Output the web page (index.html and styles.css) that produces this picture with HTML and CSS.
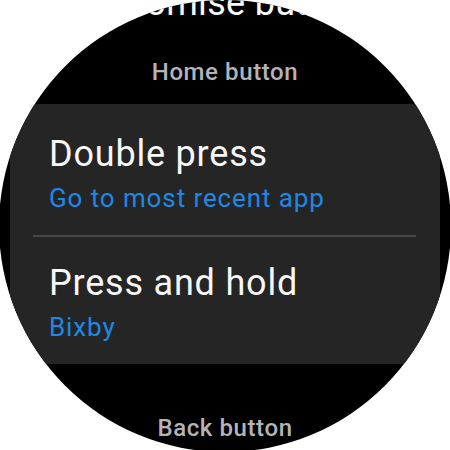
FILE: index.html
```html
<!DOCTYPE html>
<html lang="en">
<head>
<meta charset="utf-8">
<title>Customise buttons</title>
<link rel="stylesheet" href="styles.css">
</head>
<body>
<div class="watch">
  <div class="screen">
    <h1 class="title">Customise buttons</h1>
    <div class="section-label">Home button</div>
    <div class="card">
      <div class="item">
        <div class="item-title">Double press</div>
        <div class="item-value">Go to most recent app</div>
      </div>
      <div class="divider"></div>
      <div class="item">
        <div class="item-title">Press and hold</div>
        <div class="item-value">Bixby</div>
      </div>
    </div>
    <div class="section-label back">Back button</div>
  </div>
</div>
</body>
</html>
```
FILE: styles.css
```css
html, body {
  margin: 0;
  padding: 0;
  background: #ffffff;
}
body {
  width: 450px;
  height: 450px;
  overflow: hidden;
  font-family: Roboto, "Liberation Sans", sans-serif;
}
.watch {
  width: 452px;
  height: 452px;
  margin: 0 0 0 -1px;
  border-radius: 50%;
  background: #000000;
  overflow: hidden;
}
.screen {
  display: flex;
  flex-direction: column;
  padding: 0 11px 0 11px;
}
.title {
  margin: -17px 0 0 0;
  font-size: 36px;
  line-height: 40px;
  font-weight: 400;
  color: #fafafa;
  text-align: center;
  letter-spacing: 0.3px;
  white-space: nowrap;
}
.section-label {
  margin-top: 34px;
  font-size: 24px;
  line-height: 30px;
  font-weight: 500;
  color: #b3b3b8;
  text-align: center;
  letter-spacing: 0.6px;
}
.card {
  margin-top: 17px;
  background: #252525;
  border-radius: 30px;
  padding: 4px 0 0 0;
  display: flex;
  flex-direction: column;
}
.item {
  padding: 26px 0 21px 39px;
  display: flex;
  flex-direction: column;
  gap: 8px;
}
.item-title {
  font-size: 36px;
  line-height: 40px;
  color: #f7f7f7;
  letter-spacing: 0.8px;
}
.item-value {
  font-size: 26px;
  line-height: 32px;
  color: #1e88e5;
  letter-spacing: 0.9px;
}
.divider {
  height: 2px;
  margin: 0 24px 0 23px;
  background: #474747;
}
.section-label.back {
  margin-top: 49px;
}
```
